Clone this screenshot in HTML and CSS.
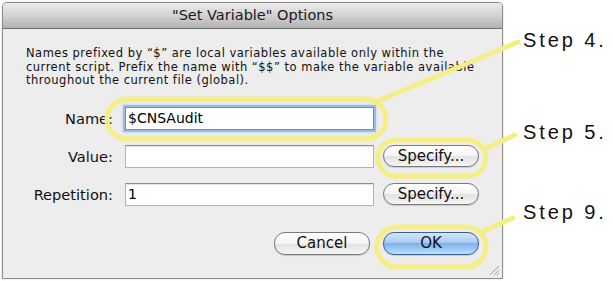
FILE: index.html
```html
<!DOCTYPE html>
<html lang="en">
<head>
<meta charset="UTF-8">
<title>"Set Variable" Options</title>
<link rel="stylesheet" href="styles.css">
</head>
<body>
<div class="stage">
    <div class="window">
        <div class="titlebar">"Set Variable" Options</div>
        <div class="content">
            <p class="note">Names prefixed by “$” are local variables available only within the<br>current script. Prefix the name with “$$” to make the variable available<br>throughout the current file (global).</p>
            <div class="form">
                <div class="row">
                    <span class="label">Name:</span>
                    <div class="field focused">$CNSAudit</div>
                </div>
                <div class="row">
                    <span class="label">Value:</span>
                    <div class="field"></div>
                    <div class="button">Specify...</div>
                </div>
                <div class="row">
                    <span class="label">Repetition:</span>
                    <div class="field">1</div>
                    <div class="button">Specify...</div>
                </div>
            </div>
            <div class="actions">
                <div class="button">Cancel</div>
                <div class="button default">OK</div>
            </div>
        </div>
        <svg class="grip" width="12" height="12" viewBox="0 0 12 12">
            <line x1="11" y1="2" x2="2" y2="11" stroke="#a0a0a0"/>
            <line x1="11" y1="6" x2="6" y2="11" stroke="#a0a0a0"/>
            <line x1="11" y1="9" x2="9" y2="11" stroke="#a0a0a0"/>
        </svg>
    </div>

    <!-- callouts drawn over the screenshot -->
    <svg class="callouts" width="613" height="281" viewBox="0 0 613 281">
        <g fill="none" stroke="#f4ee84" stroke-width="5" stroke-linecap="round">
            <rect x="107" y="99" width="279" height="40" rx="20"/>
            <rect x="378" y="140" width="108" height="36" rx="18"/>
            <rect x="377" y="227" width="109" height="40" rx="20"/>
            <line x1="378" y1="101" x2="518" y2="42"/>
            <line x1="485" y1="149" x2="515" y2="135"/>
            <line x1="484" y1="231" x2="513" y2="218"/>
        </g>
    </svg>
    <div class="step step4">Step 4.</div>
    <div class="step step5">Step 5.</div>
    <div class="step step9">Step 9.</div>
</div>
</body>
</html>
```

FILE: styles.css
```css
body {
    margin: 0;
    background-color: #fff;
    font-family: "DejaVu Sans", "Noto Sans", sans-serif;
    color: #111;
}
.stage {
    position: relative;
    width: 613px;
    height: 281px;
    overflow: hidden;
}
.window {
    position: relative;
    margin: 2px 0 0 2px;
    width: 499px;
    height: 275px;
    border: 1px solid #8c8c8c;
    border-radius: 5px 5px 0 0;
    background-color: #ededed;
    box-shadow: 0 0 2px rgba(0,0,0,0.2);
}
.titlebar {
    height: 25px;
    line-height: 25px;
    text-align: center;
    font-size: 14.5px;
    color: #1a1a1a;
    background: linear-gradient(#ececec, #d2d2d2 50%, #b2b2b2);
    border-bottom: 1px solid #6e6e6e;
    border-radius: 4px 4px 0 0;
}
.content {
    padding: 18px 23px 0 23px;
}
.note {
    margin: 0;
    font-size: 11.5px;
    line-height: 13.5px;
    letter-spacing: 0.5px;
    color: #111;
    white-space: nowrap;
}
.form {
    display: flex;
    flex-direction: column;
    gap: 16px;
    margin-top: 19.5px;
}
.row {
    display: flex;
    align-items: center;
    height: 22px;
}
.label {
    width: 87px;
    margin-right: 12px;
    text-align: right;
    font-size: 14.6px;
    color: #111;
}
.field {
    box-sizing: border-box;
    width: 249px;
    height: 23px;
    padding: 2px 2px;
    font-size: 14px;
    line-height: 17px;
    color: #000;
    background-color: #fff;
    border: 1px solid #b4b4b4;
    border-top-color: #8e8e8e;
    box-shadow: inset 0 1px 1px rgba(0,0,0,0.12);
}
.field.focused {
    border-color: #6f8fb8;
    box-shadow: 0 0 0 2px #9dbbe0, 0 0 3px 2px #b9cfea;
}
.button {
    box-sizing: border-box;
    width: 96px;
    height: 22px;
    margin-left: 9px;
    text-align: center;
    font-size: 15px;
    line-height: 20px;
    color: #111;
    border: 1px solid #7a7a7a;
    border-radius: 11px;
    background: linear-gradient(#ffffff, #f4f4f4 50%, #e2e2e2 51%, #f6f6f6);
    box-shadow: 0 1px 1px rgba(0,0,0,0.15);
}
.actions {
    display: flex;
    justify-content: flex-end;
    gap: 13px;
    margin-top: 27px;
}
.actions .button {
    margin-left: 0;
    height: 23px;
}
.button.default {
    border-color: #3a5e96;
    background: linear-gradient(#d4e6fb, #a8cbf3 45%, #7eb0ec 50%, #a6d0fa 85%, #c6e3ff);
}
.grip {
    position: absolute;
    right: 2px;
    bottom: 2px;
}
.callouts {
    position: absolute;
    left: 0;
    top: 0;
    pointer-events: none;
}
.step {
    position: absolute;
    left: 523px;
    font-family: "Liberation Sans", Arial, sans-serif;
    font-size: 20px;
    letter-spacing: 2.9px;
    color: #111;
}
.step4 { top: 29px; }
.step5 { top: 121px; }
.step9 { top: 201px; }
```
